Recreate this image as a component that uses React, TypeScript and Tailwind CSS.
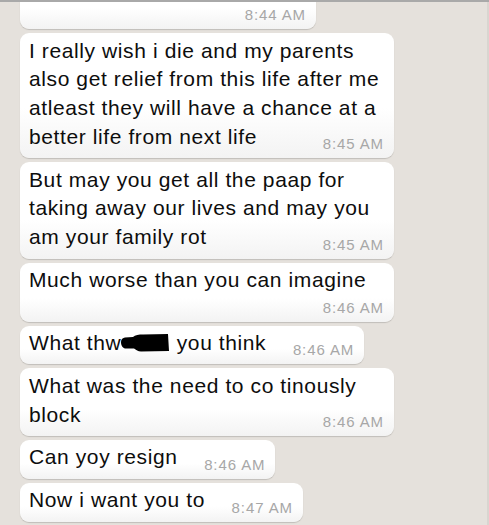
import React from "react";

const font = { fontFamily: '"Liberation Sans", Arial, sans-serif' };

function Bubble({
  children,
  time,
  wide,
  className = "",
}: {
  children: React.ReactNode;
  time: string;
  wide?: boolean;
  className?: string;
}) {
  return (
    <div
      className={`relative flow-root rounded-[9px] bg-gradient-to-b from-white from-60% to-[#f3f3f3] pl-[9px] pr-[10px] pt-[3.5px] pb-[6.5px] shadow-[0_1px_1px_rgba(0,0,0,0.16)] ${
        wide ? "w-[374px]" : "w-fit max-w-[374px]"
      } ${className}`}
    >
      <div className="text-[21px] leading-[28.8px] tracking-[0.6px] text-[#0d0d0d]">
        {children}
        <span className="float-right h-[20.2px] w-[88px]" />
      </div>
      <span className="absolute bottom-[5px] right-[10px] text-[15px] leading-[18px] tracking-[0.9px] text-[#a7a7a7]">
        {time}
      </span>
    </div>
  );
}

function Redacted() {
  return (
    <span className="inline-block h-[20px] w-[49px] align-[-3px]">
      <svg width="49" height="20" viewBox="0 0 49 20">
        <path
          d="M0 9 C0 6 2 5 4 4.5 L12 4 C14 2 18 1.5 22 1.5 L47 1 L48 18 L20 18.5 C17 18.5 15 17 13 15.5 L5 15.5 C2 15.5 0 13 0 9 Z"
          fill="#000"
        />
      </svg>
    </span>
  );
}

export default function App() {
  return (
    <div
      style={font}
      className="relative h-[525px] w-[489px] overflow-hidden border-t-2 border-[#a9a9a9] bg-[#e5e1dc]"
    >
      <div className="absolute right-0 top-0 h-full w-[2px] bg-[#d9d5d0]" />
      <div className="flex flex-col items-start gap-[4px] pl-[20px] -mt-[26px]">
        <div className="relative h-[53px] w-[296px] rounded-[9px] bg-gradient-to-b from-white from-60% to-[#f3f3f3] shadow-[0_1px_1px_rgba(0,0,0,0.16)]">
          <span className="absolute bottom-[5px] right-[10px] text-[15px] leading-[18px] tracking-[0.9px] text-[#a7a7a7]">
            8:44 AM
          </span>
        </div>
        <Bubble time="8:45 AM" wide>
          I really wish i die and my parents
          <br />
          also get relief from this life after me
          <br />
          atleast they will have a chance at a
          <br />
          better life from next life
        </Bubble>
        <Bubble time="8:45 AM" wide>
          But may you get all the paap for
          <br />
          taking away our lives and may you
          <br />
          am your family rot
        </Bubble>
        <Bubble time="8:46 AM" wide>
          Much worse than you can imagine
        </Bubble>
        <Bubble time="8:46 AM">
          What thw
          <Redacted /> you think
        </Bubble>
        <Bubble time="8:46 AM" wide>
          What was the need to co tinously
          <br />
          block
        </Bubble>
        <Bubble time="8:46 AM">Can yoy resign</Bubble>
        <Bubble time="8:47 AM">Now i want you to</Bubble>
      </div>
    </div>
  );
}
